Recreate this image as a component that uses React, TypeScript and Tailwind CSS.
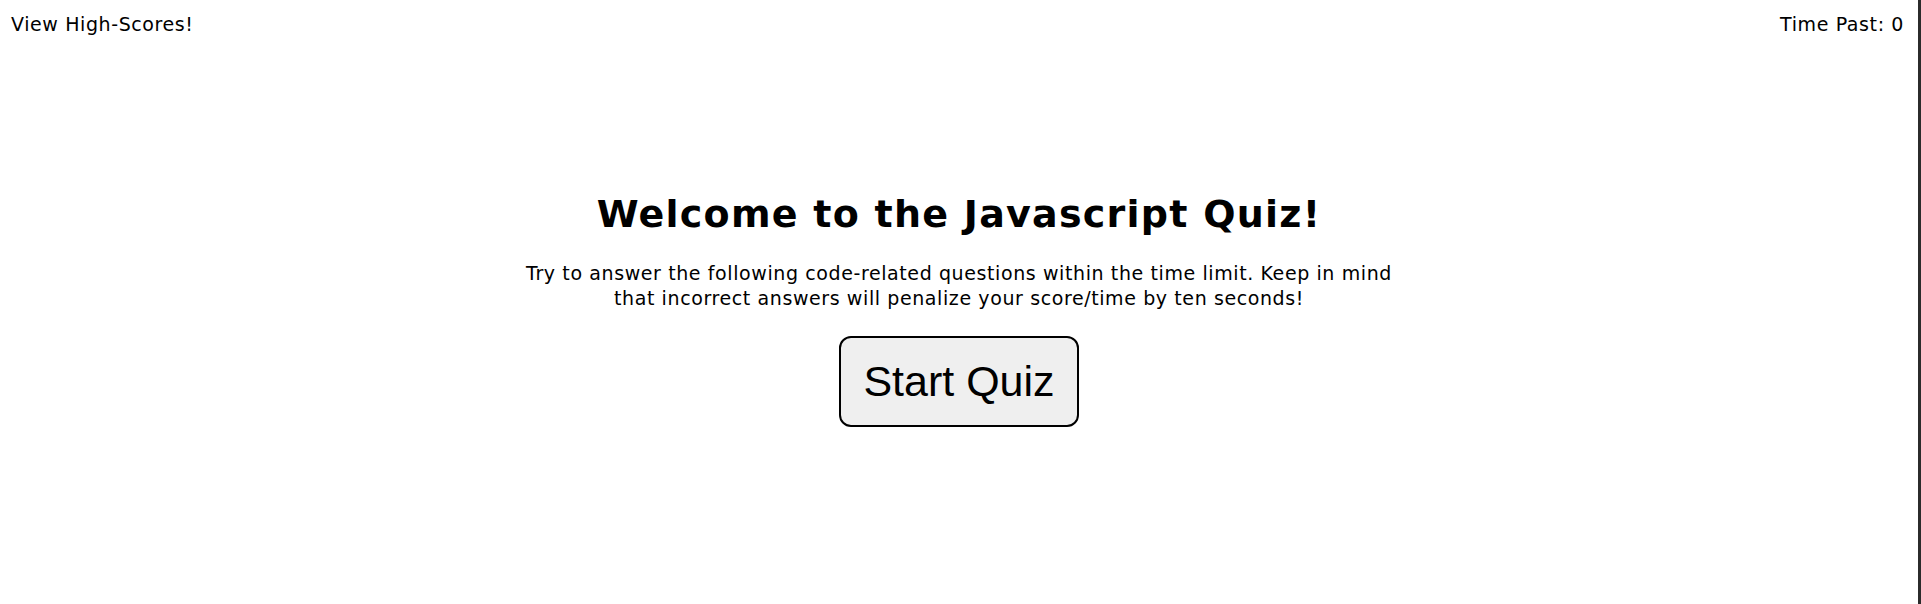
import React, { useState } from 'react';

const VERDANA = { fontFamily: '"DejaVu Sans", Verdana, sans-serif' };

const App: React.FC = () => {
  const [time] = useState(0);

  return (
    <div className="flex h-[604px] w-full bg-white text-black" style={VERDANA}>
      <div className="flex min-w-0 flex-1 flex-col">
        <header className="flex items-start justify-between pl-[11px] pr-[14px] pt-[12px] text-[19px] leading-[24px] tracking-[0.6px]">
          <a href="#" className="text-black">View High-Scores!</a>
          <span>Time Past: {time}</span>
        </header>

        <main className="mt-[156px] flex flex-col items-center text-center">
          <h1 className="text-[38px] font-bold leading-[44px] tracking-[1.25px]">Welcome to the Javascript Quiz!</h1>
          <p className="mt-[25px] max-w-[900px] text-[19px] leading-[25px] tracking-[0.6px]">
            Try to answer the following code-related questions within the time limit. Keep in mind
            that incorrect answers will penalize your score/time by ten seconds!
          </p>
          <button
            className="mt-[25px] h-[91px] rounded-[12px] border-2 border-black bg-[#efefef] px-[22px] text-[43px] leading-none"
            style={{ fontFamily: '"Liberation Sans", Arial, sans-serif' }}
          >
            Start Quiz
          </button>
        </main>
      </div>
      <div className="w-[3px] shrink-0 bg-[#2b2b2b]" />
    </div>
  );
};

export default App;
